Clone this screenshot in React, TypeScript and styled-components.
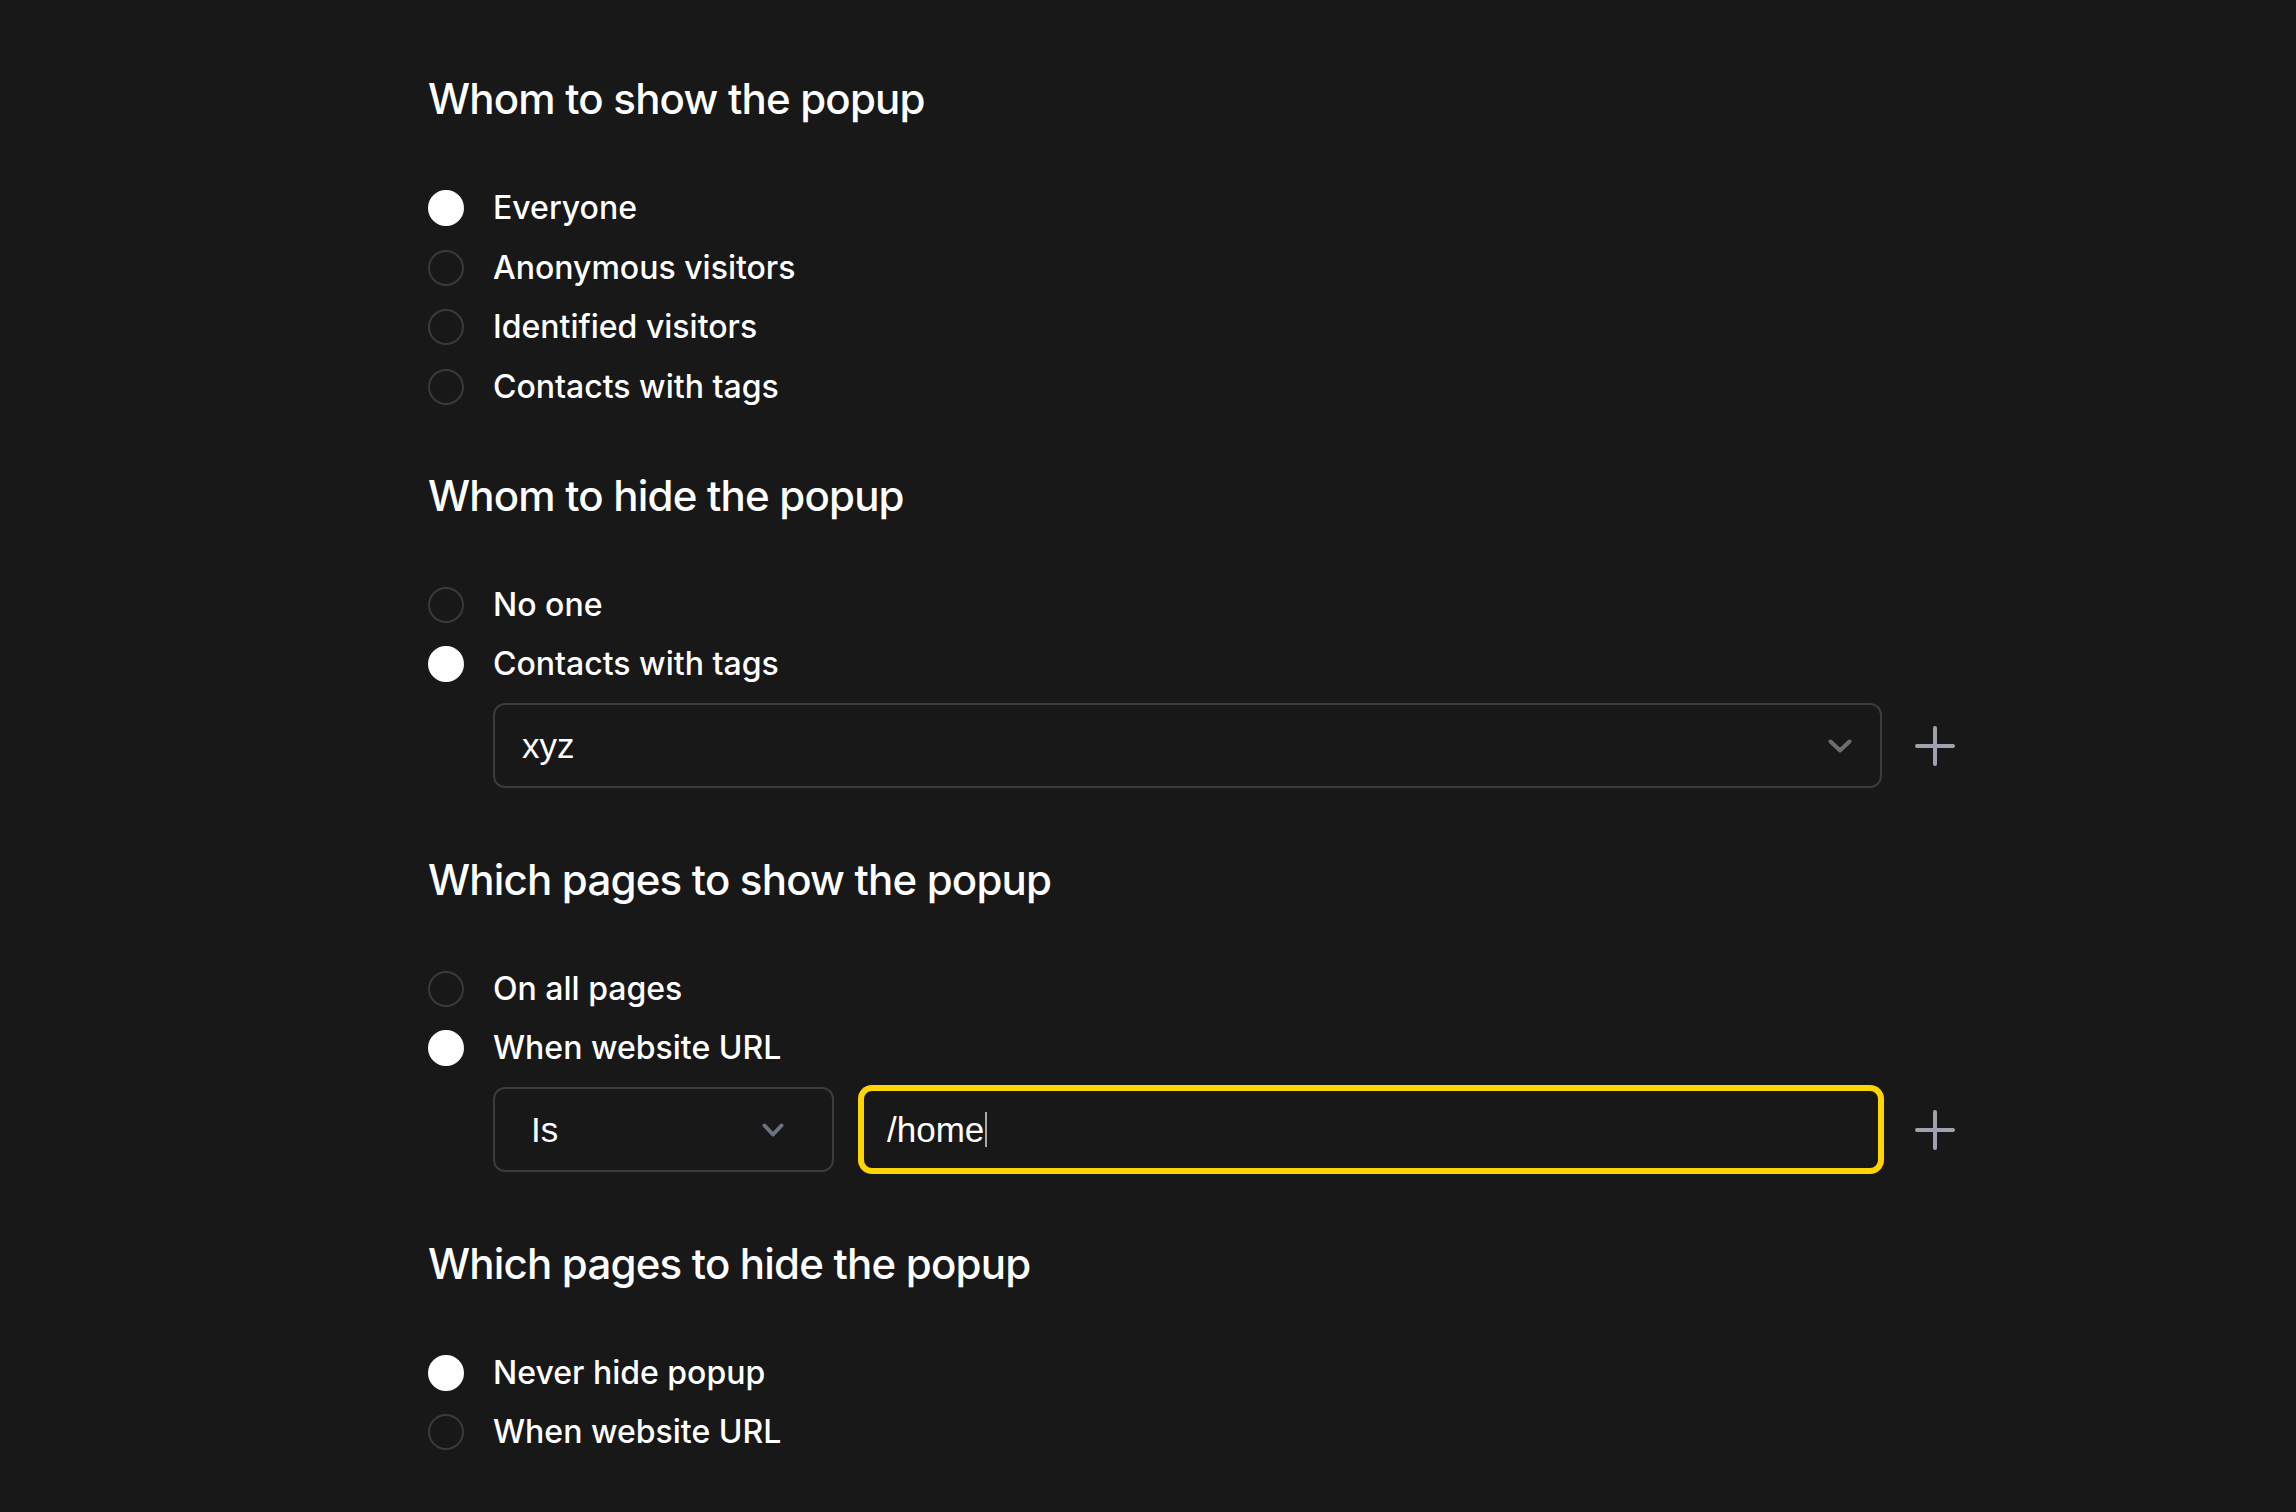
import React from "react";
import styled, { createGlobalStyle } from "styled-components";

const GlobalStyle = createGlobalStyle`
  html, body {
    margin: 0;
    padding: 0;
    background: #181818;
  }
  body {
    font-family: Inter, "Noto Sans", "Liberation Sans", sans-serif;
    color: #ffffff;
    -webkit-font-smoothing: antialiased;
  }
`;

const Page = styled.main`
  min-height: 1512px;
  box-sizing: border-box;
  padding: 73px 0 0 428px;
  display: flex;
  flex-direction: column;
  gap: 61px;
`;

const Section = styled.section`
  display: flex;
  flex-direction: column;
  gap: 61px;
`;

const Heading = styled.h2`
  margin: 0;
  font-size: 42px;
  line-height: 52px;
  font-weight: 500;
  letter-spacing: -0.8px;
  color: #ffffff;
`;

const Options = styled.div`
  display: flex;
  flex-direction: column;
  gap: 15.5px;
`;

const OptionRow = styled.label`
  display: flex;
  align-items: center;
  gap: 29px;
  height: 44px;
  cursor: pointer;
`;

const Radio = styled.span<{ $checked?: boolean }>`
  flex: none;
  width: 36px;
  height: 36px;
  box-sizing: border-box;
  border-radius: 50%;
  border: 2px solid ${(p) => (p.$checked ? "#ffffff" : "#3a3a3a")};
  background: ${(p) => (p.$checked ? "#ffffff" : "transparent")};
`;

const Label = styled.span`
  font-size: 32px;
  line-height: 44px;
  font-weight: 500;
  color: #ffffff;
`;

const FieldRow = styled.div`
  display: flex;
  align-items: center;
  gap: 33px;
  margin: 1.5px 0 4.5px 65px;
`;

const Fields = styled.div`
  display: flex;
  gap: 26px;
  width: 1389px;
`;

const Select = styled.div<{ $width?: number; $padL: number; $padR: number }>`
  ${(p) => (p.$width ? `width: ${p.$width}px; flex: none;` : "flex: 1;")}
  height: 85px;
  box-sizing: border-box;
  display: flex;
  align-items: center;
  justify-content: space-between;
  border: 2px solid #3b3b3b;
  border-radius: 12px;
  padding: 0 ${(p) => p.$padR}px 0 ${(p) => p.$padL}px;
  background: #181818;
`;

const FieldText = styled.span`
  font-family: "Liberation Sans", Arial, sans-serif;
  font-size: 35px;
  font-weight: 400;
  color: #ffffff;
  display: inline-flex;
  align-items: center;
`;

const TextInput = styled.div`
  flex: 1;
  height: 85px;
  box-sizing: border-box;
  display: flex;
  align-items: center;
  border: 4px solid #ffd500;
  box-shadow: 0 0 0 2px #ffd500;
  border-radius: 12px;
  padding: 0 0 0 23px;
  background: #181818;
`;

const Caret = styled.span`
  display: inline-block;
  width: 2px;
  height: 35px;
  margin-left: 1px;
  background: #a8a8a8;
`;

const PlusButton = styled.button`
  flex: none;
  width: 40px;
  height: 40px;
  padding: 0;
  border: 0;
  background: transparent;
  display: flex;
  cursor: pointer;
`;

const Chevron = ({ color, width }: { color: string; width: number }) => (
  <svg width={width} height={14} viewBox={`0 0 ${width} 14`} fill="none">
    <path
      d={`M2.5 2.5 L${width / 2} 11.5 L${width - 2.5} 2.5`}
      stroke={color}
      strokeWidth={4}
      strokeLinecap="round"
      strokeLinejoin="round"
    />
  </svg>
);

const PlusIcon = () => (
  <svg width={40} height={40} viewBox="0 0 40 40" fill="none">
    <path d="M20 2 V38 M2 20 H38" stroke="#9ca3af" strokeWidth={4} strokeLinecap="round" />
  </svg>
);

type Opt = { label: string; checked?: boolean };

const RadioList = ({ options, children, after }: { options: Opt[]; children?: React.ReactNode; after?: number }) => (
  <Options>
    {options.map((o, i) => (
      <React.Fragment key={o.label}>
        <OptionRow>
          <Radio $checked={o.checked} />
          <Label>{o.label}</Label>
        </OptionRow>
        {after === i && children}
      </React.Fragment>
    ))}
  </Options>
);

export default function App() {
  return (
    <>
      <GlobalStyle />
      <Page>
        <Section>
          <Heading>Whom to show the popup</Heading>
          <RadioList
            options={[
              { label: "Everyone", checked: true },
              { label: "Anonymous visitors" },
              { label: "Identified visitors" },
              { label: "Contacts with tags" },
            ]}
          />
        </Section>

        <Section>
          <Heading>Whom to hide the popup</Heading>
          <RadioList
            options={[{ label: "No one" }, { label: "Contacts with tags", checked: true }]}
            after={1}
          >
            <FieldRow>
              <Fields>
                <Select $padL={27} $padR={28}>
                  <FieldText>xyz</FieldText>
                  <Chevron color="#6e6e6e" width={24} />
                </Select>
              </Fields>
              <PlusButton aria-label="Add tag">
                <PlusIcon />
              </PlusButton>
            </FieldRow>
          </RadioList>
        </Section>

        <Section>
          <Heading>Which pages to show the popup</Heading>
          <RadioList
            options={[{ label: "On all pages" }, { label: "When website URL", checked: true }]}
            after={1}
          >
            <FieldRow>
              <Fields>
                <Select $width={341} $padL={36} $padR={48}>
                  <FieldText>Is</FieldText>
                  <Chevron color="#6b7280" width={22} />
                </Select>
                <TextInput>
                  <FieldText>
                    /home
                    <Caret />
                  </FieldText>
                </TextInput>
              </Fields>
              <PlusButton aria-label="Add URL rule">
                <PlusIcon />
              </PlusButton>
            </FieldRow>
          </RadioList>
        </Section>

        <Section>
          <Heading>Which pages to hide the popup</Heading>
          <RadioList options={[{ label: "Never hide popup", checked: true }, { label: "When website URL" }]} />
        </Section>
      </Page>
    </>
  );
}
